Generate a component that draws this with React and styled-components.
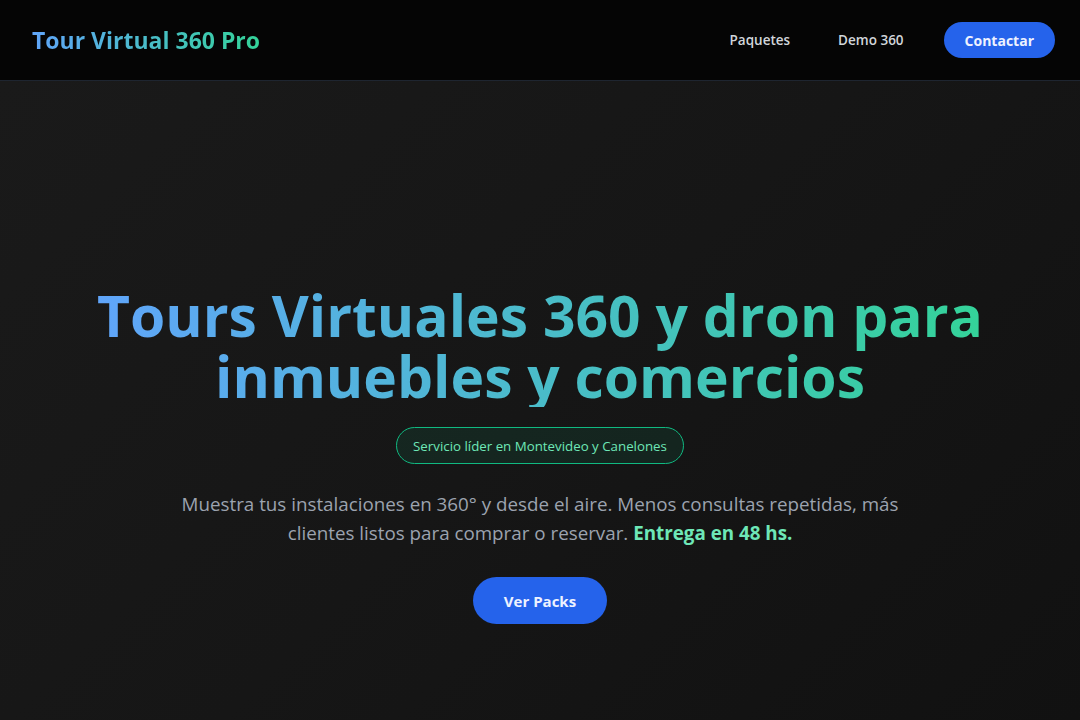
import styled, { createGlobalStyle } from "styled-components";

const GlobalStyle = createGlobalStyle`
*{
    box-sizing: border-box;
}
body{
    margin: 0;
    background: #121212;
    font-family: "Open Sans", "Noto Sans", sans-serif;
    color: #e5e7eb;
}
`;

const Page = styled.div`
min-height: 100vh;
display: flex;
flex-direction: column;
`;

const Header = styled.header`
height: 81px;
padding: 0 25px 0 32px;
display: flex;
align-items: center;
justify-content: space-between;
background-color: #050505;
border-bottom: 1px solid #1e2530;
`;

const Logo = styled.a`
font-size: 23px;
font-weight: 700;
text-decoration: none;
background: linear-gradient(90deg, #60a5fa, #34d399);
-webkit-background-clip: text;
background-clip: text;
color: transparent;
`;

const Nav = styled.nav`
display: flex;
align-items: center;
gap: 40px;
`;

const NavLink = styled.a`
font-size: 13.5px;
font-weight: 600;
color: #d1d5db;
text-decoration: none;
& + &{
    margin-left: 8px;
}
`;

const PillButton = styled.a`
display: inline-flex;
align-items: center;
justify-content: center;
background-color: #2563eb;
color: #eef2ff;
font-weight: 700;
text-decoration: none;
border-radius: 999px;
height: ${({ big }) => (big ? "47px" : "36px")};
padding: ${({ big }) => (big ? "0 31px" : "0 21px")};
font-size: ${({ big }) => (big ? "15px" : "14px")};
`;

const Hero = styled.main`
flex: 1;
display: flex;
flex-direction: column;
align-items: center;
justify-content: center;
text-align: center;
padding: 108px 24px 0;
background: linear-gradient(135deg, #1a1a1a 0%, #161616 50%, #111111 100%);
`;

const Heading = styled.h1`
display: inline-block;
margin: 0;
font-size: 57px;
line-height: 61px;
font-weight: 700;
background: linear-gradient(90deg, #60a5fa, #34d399);
-webkit-background-clip: text;
background-clip: text;
color: transparent;
`;

const Badge = styled.div`
margin-top: 20px;
display: inline-flex;
align-items: center;
height: 37px;
padding: 0 16px;
border-radius: 999px;
border: 1px solid #10b981;
background-color: rgba(16, 185, 129, 0.1);
color: #6ee7b7;
font-size: 13.3px;
`;

const Lead = styled.p`
max-width: 740px;
margin: 26px 0 29px;
font-size: 18.8px;
line-height: 29px;
color: #9ca3af;
strong{
    color: #6ee7b7;
    font-weight: 700;
}
`;

export default function App() {
    return (
        <Page>
            <GlobalStyle />
            <Header>
                <Logo href="#">Tour Virtual 360 Pro</Logo>
                <Nav>
                    <NavLink href="#paquetes">Paquetes</NavLink>
                    <NavLink href="#demo">Demo 360</NavLink>
                    <PillButton href="#contacto">Contactar</PillButton>
                </Nav>
            </Header>
            <Hero>
                <Heading>
                    Tours Virtuales 360 y dron para
                    <br />
                    inmuebles y comercios
                </Heading>
                <Badge>Servicio líder en Montevideo y Canelones</Badge>
                <Lead>
                    Muestra tus instalaciones en 360° y desde el aire. Menos consultas repetidas, más
                    clientes listos para comprar o reservar. <strong>Entrega en 48 hs.</strong>
                </Lead>
                <PillButton big href="#paquetes">Ver Packs</PillButton>
            </Hero>
        </Page>
    );
}
